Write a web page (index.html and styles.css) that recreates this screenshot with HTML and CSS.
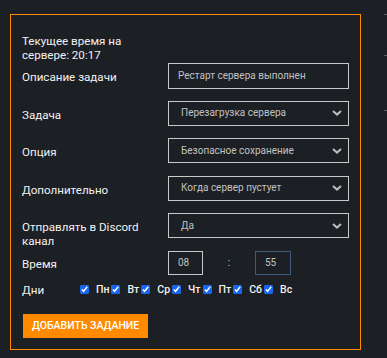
FILE: index.html
```html
<!DOCTYPE html>
<html lang="ru">
<head>
<meta charset="utf-8">
<title>Задания</title>
<link rel="stylesheet" href="styles.css">
</head>
<body>
<div class="page">
  <form class="panel">
    <div class="now">Текущее время на сервере: 20:17</div>
    <div class="grid">
      <label class="lbl">Описание задачи</label>
      <div class="ctrl input">Рестарт сервера выполнен</div>

      <label class="lbl">Задача</label>
      <div class="ctrl select"><span>Перезагрузка сервера</span><svg class="chev" width="10" height="6" viewBox="0 0 10 6"><path d="M1 1l4 3.6L9 1" fill="none" stroke="#bdbdbd" stroke-width="2"/></svg></div>

      <label class="lbl">Опция</label>
      <div class="ctrl select"><span>Безопасное сохранение</span><svg class="chev" width="10" height="6" viewBox="0 0 10 6"><path d="M1 1l4 3.6L9 1" fill="none" stroke="#bdbdbd" stroke-width="2"/></svg></div>

      <label class="lbl">Дополнительно</label>
      <div class="ctrl select"><span>Когда сервер пустует</span><svg class="chev" width="10" height="6" viewBox="0 0 10 6"><path d="M1 1l4 3.6L9 1" fill="none" stroke="#bdbdbd" stroke-width="2"/></svg></div>

      <label class="lbl">Отправлять в Discord канал</label>
      <div class="ctrl select"><span>Да</span><svg class="chev" width="10" height="6" viewBox="0 0 10 6"><path d="M1 1l4 3.6L9 1" fill="none" stroke="#bdbdbd" stroke-width="2"/></svg></div>

      <label class="lbl lbl-time">Время</label>
      <div class="time">
        <div class="tbox">08</div>
        <span class="colon">:</span>
        <div class="tbox focus">55</div>
      </div>
    </div>

    <div class="days">
      <span class="days-lbl">Дни</span>
      <label class="day"><input type="checkbox" checked><span>Пн</span></label>
      <label class="day"><input type="checkbox" checked><span>Вт</span></label>
      <label class="day"><input type="checkbox" checked><span>Ср</span></label>
      <label class="day"><input type="checkbox" checked><span>Чт</span></label>
      <label class="day"><input type="checkbox" checked><span>Пт</span></label>
      <label class="day"><input type="checkbox" checked><span>Сб</span></label>
      <label class="day"><input type="checkbox" checked><span>Вс</span></label>
    </div>

    <button type="button" class="btn">Добавить задание</button>
  </form>
  <div class="side">
    <div class="tick t1"></div>
    <div class="tick t2"></div>
    <div class="tick t3"></div>
  </div>
</div>
</body>
</html>
```
FILE: styles.css
```css
html, body {
  margin: 0;
  padding: 0;
  background: #1c1f23;
  height: 100%;
}
body {
  font-family: Roboto, "Noto Sans", "Liberation Sans", sans-serif;
  color: #f2f2f2;
  font-size: 11.6px;
  line-height: 14px;
}
.page {
  display: flex;
  align-items: flex-start;
  padding: 14px 0 0 10px;
}
.panel {
  box-sizing: border-box;
  width: 351px;
  height: 336px;
  border: 1px solid #ff8a00;
  padding: 19px 0 0 11px;
  display: flex;
  flex-direction: column;
  align-items: flex-start;
}
.now {
  width: 118px;
  margin-bottom: 1px;
}
.grid {
  display: grid;
  grid-template-columns: 146px 181px;
  grid-auto-rows: 25px;
  row-gap: 12.5px;
}
.lbl {
  width: 126px;
  padding-top: 7px;
}
.lbl-time { padding-top: 6px; }
.ctrl {
  box-sizing: border-box;
  border: 1px solid #c9c9c9;
  height: 25px;
  display: flex;
  align-items: center;
  font-size: 10px;
  color: #c2c2c2;
}
.input { padding-left: 9px; height: 26px; }
.select {
  padding: 0 6px 0 12px;
  justify-content: space-between;
}
.chev { display: block; }
.time {
  display: flex;
  align-items: center;
  height: 24px;
}
.tbox {
  box-sizing: border-box;
  width: 35px;
  height: 24px;
  border: 1px solid #c9c9c9;
  display: flex;
  align-items: center;
  padding-left: 9px;
  font-size: 10px;
  color: #c2c2c2;
}
.tbox.focus { border-color: #3e5a7c; width: 36px; }
.colon {
  width: 52px;
  text-align: center;
  color: #b9d1ea;
  font-size: 10px;
}
.days {
  display: flex;
  align-items: center;
  height: 14px;
  margin-top: 7px;
}
.days-lbl { width: 58px; }
.day {
  display: flex;
  align-items: center;
  font-size: 10.5px;
  font-weight: 500;
  margin-right: 2px;
}
.day input {
  width: 9px;
  height: 9px;
  margin: 0 7px 0 0;
  accent-color: #1565f0;
}
.btn {
  margin-top: 17px;
  margin-left: 1px;
  height: 24px;
  padding: 0 9px;
  border: 0;
  background: #ff8a00;
  color: #fff;
  font-family: Roboto, "Noto Sans", sans-serif;
  font-size: 10.5px;
  font-weight: 500;
  text-transform: uppercase;
}
.side {
  margin-left: 23px;
  display: flex;
  flex-direction: column;
}
.tick {
  width: 3px;
  height: 1px;
  background: #5a5d62;
}
.t2 { margin-top: 40px; }
.t3 { margin-top: 54px; }
```
